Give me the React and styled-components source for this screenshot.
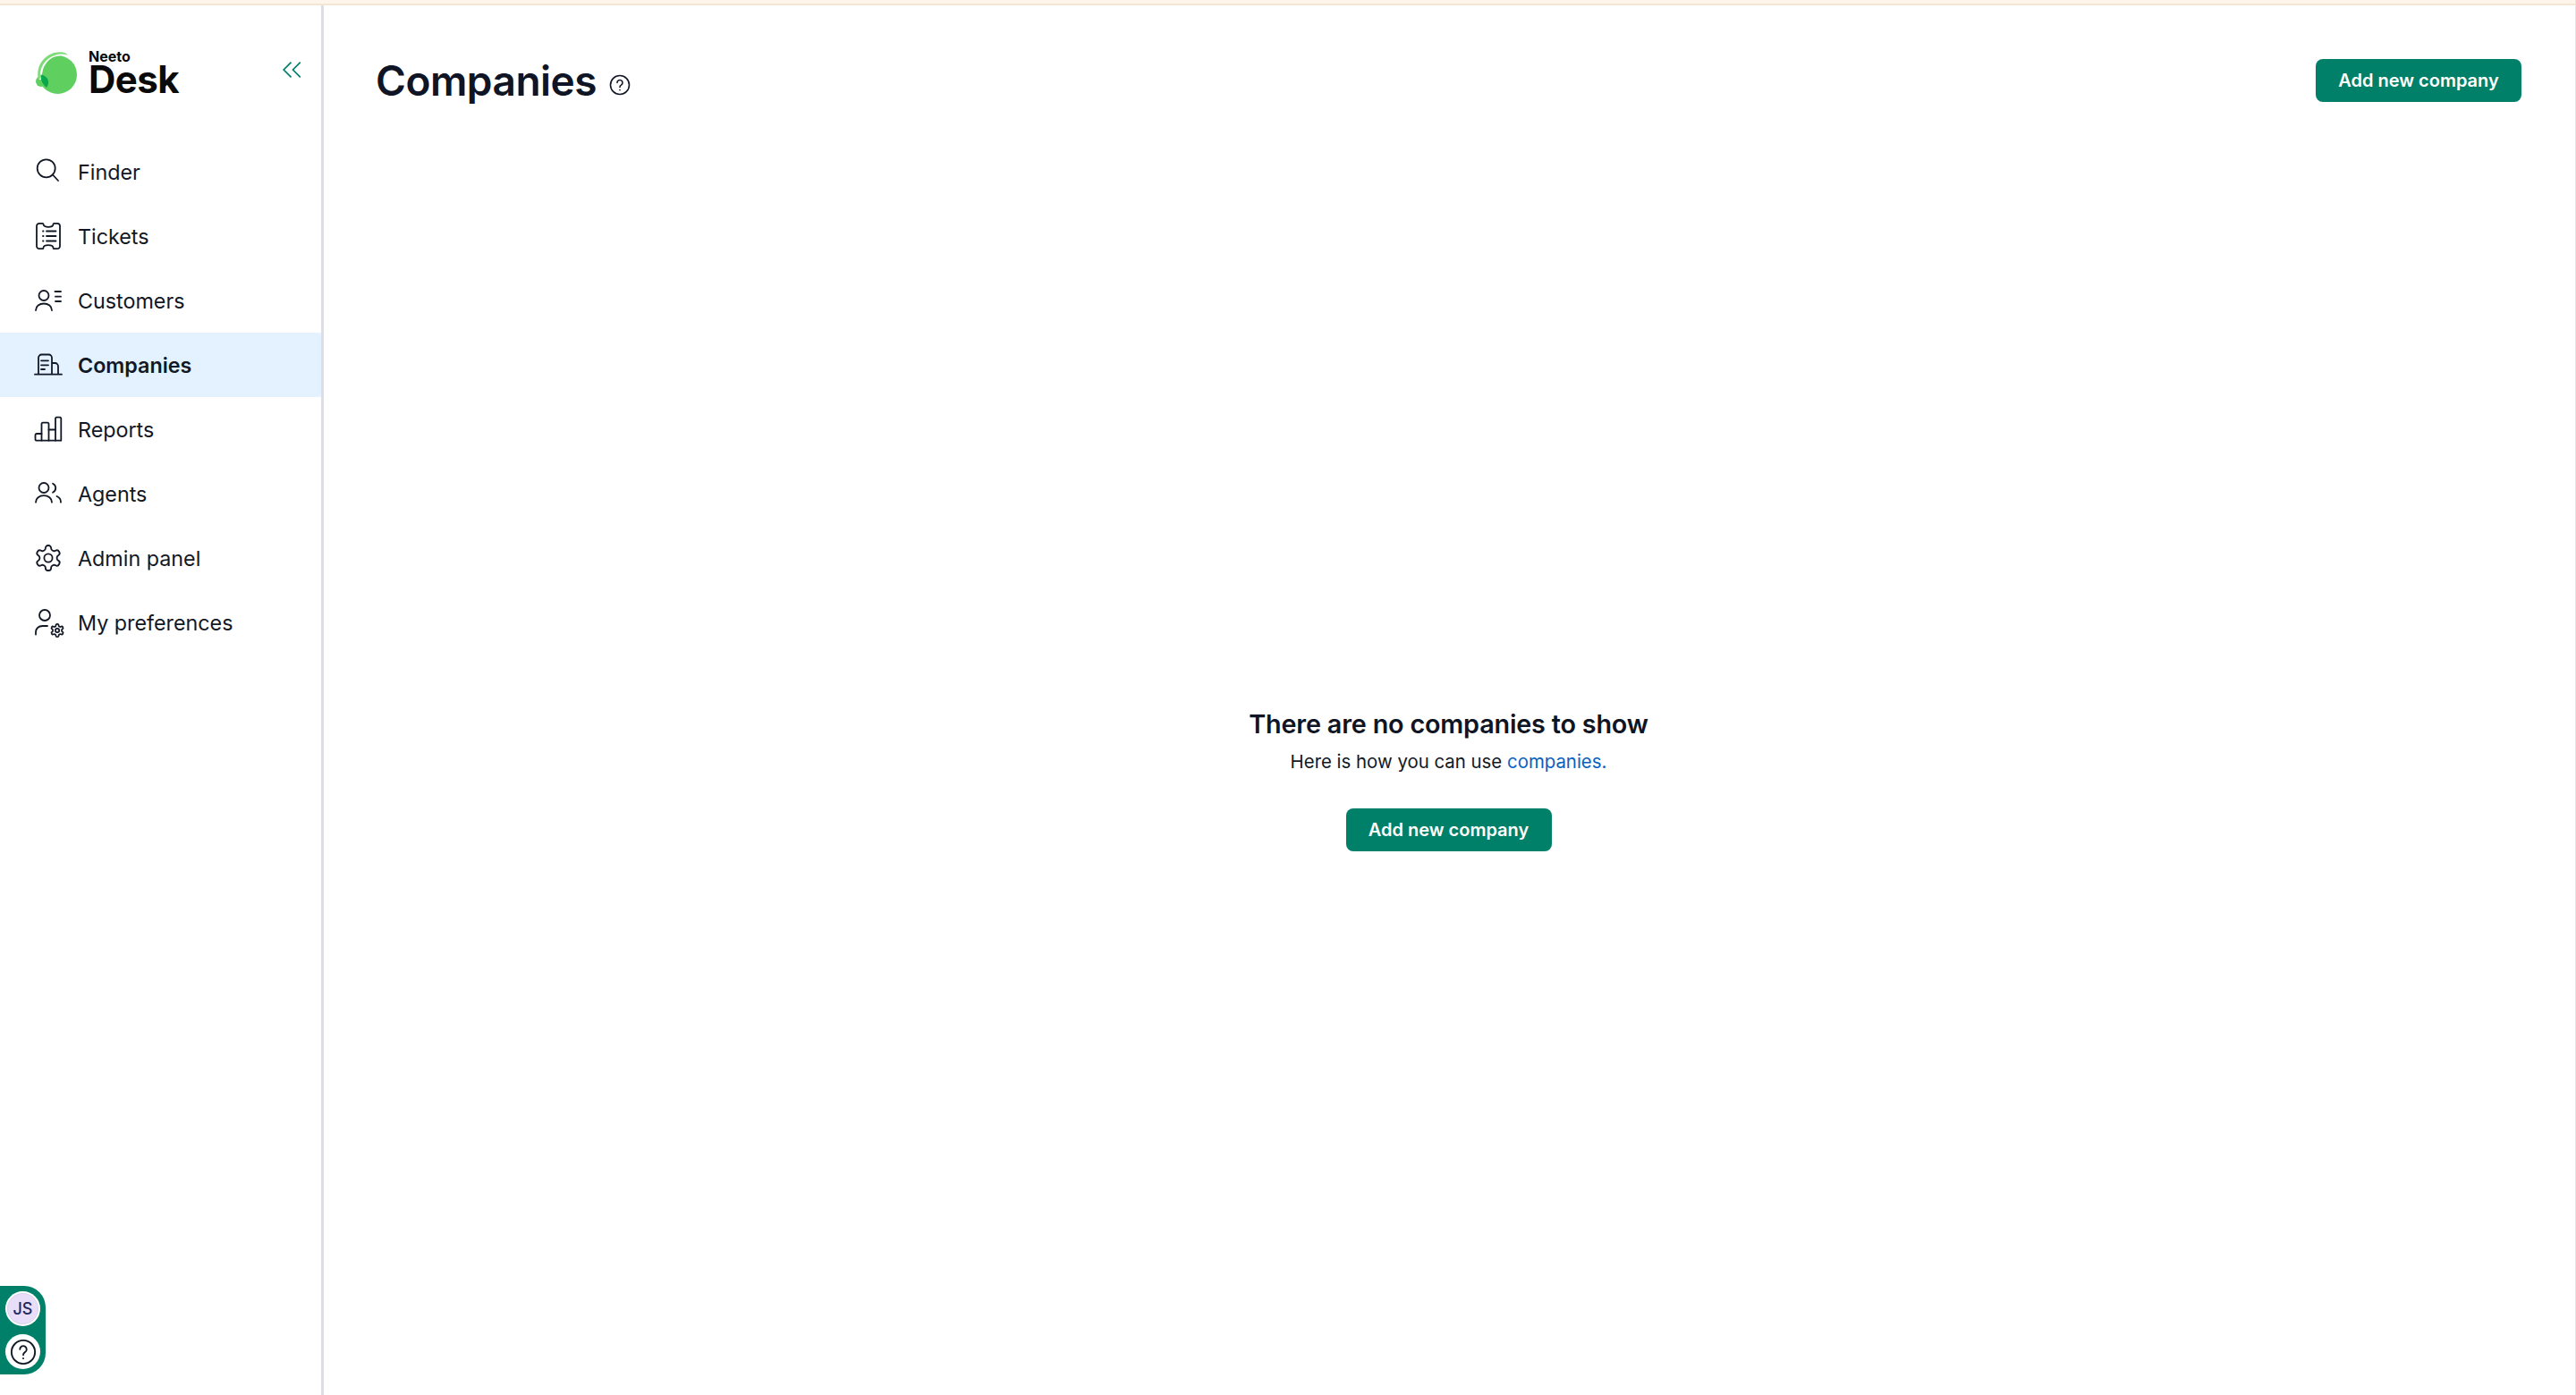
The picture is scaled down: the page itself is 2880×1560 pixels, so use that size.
import React from 'react';
import styled, { createGlobalStyle } from 'styled-components';

const GlobalStyle = createGlobalStyle`
  html, body {
    margin: 0;
    padding: 0;
    background: #fff;
    font-family: Inter, "Liberation Sans", sans-serif;
    color: #0f1524;
  }
`;

const green = '#008068';
const ink = '#121826';

const Page = styled.div`
  width: 2880px;
  height: 1560px;
  display: flex;
  flex-direction: column;
  overflow: hidden;
  box-sizing: border-box;
  border-right: 1px solid #e4e5e9;
`;

const TopStrip = styled.div`
  height: 4px;
  flex: none;
  background: #fdf5e9;
  border-bottom: 2px solid #f2e6d5;
`;

const Body = styled.div`
  flex: 1;
  display: flex;
  min-height: 0;
`;

const Sidebar = styled.aside`
  width: 362px;
  flex: none;
  box-sizing: border-box;
  border-right: 3px solid #dcdfe4;
  display: flex;
  flex-direction: column;
`;

const Brand = styled.div`
  height: 150px;
  display: flex;
  align-items: flex-start;
  padding: 51px 22px 0 40px;
  box-sizing: border-box;
`;

const LogoWords = styled.div`
  margin-left: 13px;
  display: flex;
  flex-direction: column;
  color: #0a0a0a;
`;

const LogoSmall = styled.span`
  font-size: 16px;
  line-height: 13px;
  font-weight: 700;
`;

const LogoBig = styled.span`
  font-size: 42px;
  line-height: 38px;
  font-weight: 700;
  letter-spacing: -0.5px;
`;

const Collapse = styled.button`
  margin-left: auto;
  margin-top: 12px;
  padding: 0;
  border: 0;
  background: none;
  color: ${green};
  display: flex;
`;

const NavList = styled.nav`
  display: flex;
  flex-direction: column;
`;

const NavItem = styled.a`
  height: 72px;
  display: flex;
  align-items: center;
  padding-left: 38px;
  gap: 17px;
  font-size: 23.3px;
  font-weight: ${(p) => (p.$active ? 600 : 400)};
  background: ${(p) => (p.$active ? '#e3f2fe' : 'transparent')};
  color: ${ink};
`;

const NavIcon = styled.svg`
  width: 32px;
  height: 32px;
  flex: none;
  overflow: visible;
  fill: none;
  stroke: ${ink};
  stroke-width: 1.8;
  stroke-linecap: round;
  stroke-linejoin: round;
`;

const Main = styled.main`
  flex: 1;
  display: flex;
  flex-direction: column;
  min-width: 0;
`;

const Header = styled.header`
  display: flex;
  align-items: center;
  justify-content: space-between;
  padding: 60px 60px 0 58px;
`;

const TitleRow = styled.div`
  display: flex;
  align-items: center;
  gap: 14px;
`;

const Title = styled.h1`
  margin: 0;
  font-size: 46px;
  line-height: 48px;
  font-weight: 600;
  letter-spacing: -0.5px;
  color: #0f1524;
`;

const HelpIcon = styled.svg`
  width: 24px;
  height: 24px;
  margin-top: 10px;
  fill: none;
  stroke: ${ink};
  stroke-width: 1.6;
  stroke-linecap: round;
`;

const Button = styled.button`
  height: 48px;
  width: 230px;
  border: 0;
  border-radius: 8px;
  background: ${green};
  color: #fff;
  font-family: inherit;
  font-size: 20px;
  font-weight: 600;
  padding: 0;
`;

const Empty = styled.section`
  display: flex;
  flex-direction: column;
  align-items: center;
  margin-top: 676px;
  padding-right: 2px;
`;

const EmptyTitle = styled.h2`
  margin: 0;
  font-size: 28.8px;
  line-height: 40px;
  font-weight: 600;
  letter-spacing: -0.2px;
  color: #0f1524;
`;

const EmptyText = styled.p`
  margin: 7px 0 0;
  font-size: 20.4px;
  line-height: 30px;
  color: ${ink};
`;

const EmptyLink = styled.a`
  color: #0b5fc0;
`;

const EmptyAction = styled.div`
  margin-top: 37px;
`;

const Widget = styled.div`
  position: fixed;
  left: 0;
  top: 1438px;
  width: 51px;
  height: 99px;
  box-sizing: border-box;
  background: ${green};
  border-radius: 0 24px 24px 0;
  display: flex;
  flex-direction: column;
  align-items: flex-end;
  justify-content: space-between;
  padding: 6px 6px 6px 0;
`;

const WidgetCircle = styled.div`
  width: 39px;
  height: 39px;
  border-radius: 50%;
  background: #fff;
  display: flex;
  align-items: center;
  justify-content: center;
`;

const Avatar = styled.div`
  width: 35px;
  height: 35px;
  border-radius: 50%;
  background: #e8defa;
  border: 1px solid #d6d2ea;
  box-sizing: border-box;
  display: flex;
  align-items: center;
  justify-content: center;
  font-size: 18px;
  font-weight: 500;
  color: #1f2a60;
`;

const QuestionSvg = styled.svg`
  width: 30px;
  height: 30px;
  fill: none;
  stroke: ${ink};
  stroke-width: 1.5;
  stroke-linecap: round;
`;

const gearPath =
  'M12.22 2h-.44a2 2 0 0 0-2 2v.18a2 2 0 0 1-1 1.73l-.43.25a2 2 0 0 1-2 0l-.15-.08a2 2 0 0 0-2.73.73l-.22.38a2 2 0 0 0 .73 2.73l.15.1a2 2 0 0 1 1 1.72v.51a2 2 0 0 1-1 1.74l-.15.09a2 2 0 0 0-.73 2.73l.22.38a2 2 0 0 0 2.73.73l.15-.08a2 2 0 0 1 2 0l.43.25a2 2 0 0 1 1 1.73V20a2 2 0 0 0 2 2h.44a2 2 0 0 0 2-2v-.18a2 2 0 0 1 1-1.73l.43-.25a2 2 0 0 1 2 0l.15.08a2 2 0 0 0 2.73-.73l.22-.39a2 2 0 0 0-.73-2.73l-.15-.08a2 2 0 0 1-1-1.74v-.5a2 2 0 0 1 1-1.74l.15-.09a2 2 0 0 0 .73-2.73l-.22-.38a2 2 0 0 0-2.73-.73l-.15.08a2 2 0 0 1-2 0l-.43-.25a2 2 0 0 1-1-1.73V4a2 2 0 0 0-2-2z';

const icons = {
  finder: (
    <>
      <circle cx="13.700" cy="12.300" r="10" />
      <path d="M21 19.500L27 26" />
    </>
  ),
  tickets: (
    <>
      <path d="M6 1.800h3.500c.6 0 1 .4 1 1 0 1.800 2.300 3 5.500 3s5.500-1.200 5.500-3c0-.6.400-1 1-1H26a3 3 0 0 1 3 3v22.400a3 3 0 0 1-3 3h-3.500c-.6 0-1-.4-1-1 0-1.800-2.300-3-5.500-3s-5.500 1.200-5.500 3c0 .6-.4 1-1 1H6a3 3 0 0 1-3-3V4.800a3 3 0 0 1 3-3z" />
      <path d="M14 10.500h10.500M14 16h10.500M14 21.500h10.500M10 10.500h.5M10 16h.5M10 21.500h.5" />
    </>
  ),
  customers: (
    <>
      <circle cx="11" cy="10.500" r="5.500" />
      <path d="M2 27c0-4.500 4-7.500 9-7.500s9 3 9 7.500" />
      <path d="M23.500 6h6.500M24 11.700h6M24 17h6" />
    </>
  ),
  companies: (
    <>
      <path d="M1 26.700h30M5 26.700V8a3.500 3.500 0 0 1 3.500-3.500h8A3.500 3.500 0 0 1 20 8v18.700M20 14h3.500a3.500 3.500 0 0 1 3.500 3.500v9.200" />
      <path d="M8 11.300h8M8 16.300h8M8 21h4" />
    </>
  ),
  reports: (
    <>
      <path d="M8.500 21H3a1.500 1.500 0 0 0-1.500 1.500v4.700a1.500 1.500 0 0 0 1.500 1.500h26.300" />
      <path d="M8.500 28.700V10a1.300 1.300 0 0 1 1.300-1.300h5.400a1.300 1.300 0 0 1 1.300 1.300v18.700" />
      <path d="M16.500 16.500h7.500" />
      <path d="M24 28.700V4a1.300 1.300 0 0 1 1.300-1.300h3.700a1.300 1.300 0 0 1 1.300 1.300v24.700" />
    </>
  ),
  agents: (
    <>
      <circle cx="11" cy="9.500" r="5.500" />
      <path d="M2 25.700c0-4.500 4-7.500 9-7.500s9 3 9 7.500" />
      <path d="M21 4.700a5.500 5.500 0 0 1 0 10M25.500 19c2.600 1 4.500 3.600 4.500 6.700" />
    </>
  ),
  admin: (
    <>
      <g transform="translate(-0.800 -0.800) scale(1.400)" strokeWidth="1.300">
        <path d={gearPath} />
      </g>
      <circle cx="16" cy="16" r="4.600" />
    </>
  ),
  prefs: (
    <>
      <circle cx="12" cy="8" r="6" />
      <path d="M2 29.500V27c0-4 3-7 7.500-7H15" />
      <g transform="translate(17.400 16.400) scale(0.720)" strokeWidth="2.400">
        <path d={gearPath} />
        <circle cx="12" cy="12" r="3" />
      </g>
    </>
  ),
};

const navItems = [
  { label: 'Finder', icon: 'finder' },
  { label: 'Tickets', icon: 'tickets' },
  { label: 'Customers', icon: 'customers' },
  { label: 'Companies', icon: 'companies', active: true },
  { label: 'Reports', icon: 'reports' },
  { label: 'Agents', icon: 'agents' },
  { label: 'Admin panel', icon: 'admin' },
  { label: 'My preferences', icon: 'prefs' },
];

function Logo() {
  return (
    <svg width="46" height="48" viewBox="0 0 46 48" style={{ flex: 'none' }}>
      <circle cx="24.500" cy="26.500" r="21.500" fill="#5fcf60" />
      <circle cx="6" cy="34" r="6" fill="#5fcf60" />
      <path d="M5.500 32C4 15 15 4.500 27 3.800" fill="none" stroke="#fff" strokeWidth="3" />
      <path d="M3 33C-1 15 12 .5 28 1.200c3 .2 5.500 1 8 3.300-3-1-6-1.200-8.500-1C15 4.500 3.500 15 5 30.500z" fill="#7ddb78" />
      <path d="M5.500 26.500c5 .5 9.500 4.500 8.500 10-.2 1.500-1 3-2 4.500-4-3.500-7-8.500-6.500-14.500z" fill="#0ba84a" />
    </svg>
  );
}

function Question({ as: Svg }) {
  return (
    <Svg viewBox="0 0 24 24">
      <circle cx="12" cy="12" r="10.500" />
      <path d="M9 9.500a3 3 0 1 1 4.500 2.600c-1 .6-1.500 1.200-1.500 2.400" />
      <path d="M12 17.500v.2" />
    </Svg>
  );
}

export default function App() {
  return (
    <Page>
      <GlobalStyle />
      <TopStrip />
      <Body>
        <Sidebar>
          <Brand>
            <Logo />
            <LogoWords>
              <LogoSmall>Neeto</LogoSmall>
              <LogoBig>Desk</LogoBig>
            </LogoWords>
            <Collapse>
              <svg width="21" height="18" viewBox="0 0 21 18" fill="none" stroke="currentColor" strokeWidth="1.700">
                <path d="M9.500 .7L1.200 9l8.300 8.300M19.800 .7L11.500 9l8.300 8.300" />
              </svg>
            </Collapse>
          </Brand>
          <NavList>
            {navItems.map((item) => (
              <NavItem key={item.label} $active={item.active}>
                <NavIcon viewBox="0 0 32 32">{icons[item.icon]}</NavIcon>
                {item.label}
              </NavItem>
            ))}
          </NavList>
        </Sidebar>
        <Main>
          <Header>
            <TitleRow>
              <Title>Companies</Title>
              <Question as={HelpIcon} />
            </TitleRow>
            <Button>Add new company</Button>
          </Header>
          <Empty>
            <EmptyTitle>There are no companies to show</EmptyTitle>
            <EmptyText>
              Here is how you can use <EmptyLink>companies.</EmptyLink>
            </EmptyText>
            <EmptyAction>
              <Button>Add new company</Button>
            </EmptyAction>
          </Empty>
        </Main>
      </Body>
      <Widget>
        <WidgetCircle>
          <Avatar>JS</Avatar>
        </WidgetCircle>
        <WidgetCircle>
          <Question as={QuestionSvg} />
        </WidgetCircle>
      </Widget>
    </Page>
  );
}
